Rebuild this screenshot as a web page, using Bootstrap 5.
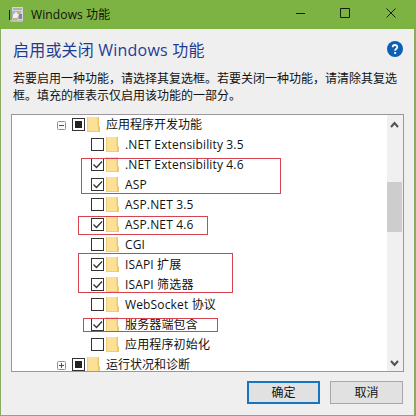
<!DOCTYPE html>
<html lang="zh-CN">
<head>
    <meta charset="UTF-8">
    <meta name="viewport" content="width=device-width, initial-scale=1">
    <title>Windows 功能</title>
    <link href="https://cdn.jsdelivr.net/npm/bootstrap@5.3.0/dist/css/bootstrap.min.css" rel="stylesheet">
    <style>
        body {
            font-family: "Open Sans", "Noto Sans CJK SC", sans-serif;
            font-size: 12px;
            line-height: 17px;
            color: #111;
            background: #f0f0f0;
            overflow: hidden;
        }
        svg { display: block; flex: none; }
        .win { width: 416px; height: 416px; background: #efefef; }
        .win-title { height: 29px; background: #7cb342; padding-left: 8px; }
        .win-title span { margin-left: 7px; letter-spacing: .12px; }
        .win-body {
            height: 387px;
            border: solid #8cab62;
            border-width: 0 2px 1px 1px;
            padding: 10px 10px 0;
        }
        .win-heading { height: 24px; font-size: 16px; line-height: 22px; color: #1f3c94; padding-left: 2px; letter-spacing: .2px; }
        .help { margin: 2px 1px 0 0; }
        .win-desc { margin: 7px -8px 0 2px; height: 44px; }
        .tree { height: 258px; background: #fff; border: 1px solid #9b969b; }
        .tree-row { height: 20px; }
        .tree-row span { margin-left: 6px; line-height: 12px; white-space: nowrap; }
        .tree-row.parent { padding-left: 45px; }
        .tree-row.child { padding-left: 79px; }
        .tree-row.child span { letter-spacing: .15px; }
        .expander { margin: 1px 6px 0 0; }
        .box { margin: 0 2px 1px 0; }
        .scroll { width: 16px; background: #f0f0f0; }
        .thumb { height: 50px; width: 15px; background: #cdcdcd; }
        .dlg-actions { gap: 10px; padding: 9px 1px 0 0; }
        .dlg-btn { width: 73px; height: 23px; font-size: 12px; line-height: 19px; padding: 0; border: 1px solid #aba6ab; border-radius: 0; background: #e1e1e1; color: #111; }
        .dlg-btn.default { border: 2px solid #1874bd; }
        .marker { position: absolute; border: 1px solid #d7434f; }
        .m1 { left: 81px; top: 158px; width: 200px; height: 36px; }
        .m2 { left: 78px; top: 216px; width: 130px; height: 19px; }
        .m3 { left: 78px; top: 253px; width: 155px; height: 40px; }
        .m4 { left: 83px; top: 318px; width: 135px; height: 14px; }
    </style>
</head>
<body>

<div class="win position-relative">
    <!-- Title bar -->
    <div class="win-title d-flex align-items-center">
        <svg width="16" height="18" viewBox="0 0 16 18">
            <path d="M4 1h11v14H4z" fill="#d8d3d6"/>
            <path d="M5 2h9v2H5z" fill="#b4aeb4"/>
            <path d="M4 5h9v8H4z" fill="#a9b7d5"/>
            <path d="M5 9l3-3 3 2-2 4H5z" fill="#f2f2e8"/>
            <path d="M9 5h2v3H9zM5 12h4v2H5z" fill="#d5b347"/>
            <path d="M11 8h3v5h-3z" fill="#7a879f"/>
            <path d="M2 14h12v2H3z" fill="#c3bdbf"/>
            <path d="M1.500 4v10" stroke="#222"/>
        </svg>
        <span class="me-auto">Windows 功能</span>
        <svg width="120" height="29" viewBox="296 0 120 29" fill="none" stroke="#16200c">
            <path d="M295 13.500h10M340.500 8.500h9v9h-9zM386.500 8.500l9 9M395.500 8.500l-9 9"/>
        </svg>
    </div>

    <div class="win-body">
        <div class="win-heading d-flex justify-content-between">
            <span>启用或关闭 Windows 功能</span>
            <svg class="help" width="16" height="16" viewBox="0 0 16 16">
                <circle cx="8" cy="8" r="8" fill="#0d5fb3"/>
                <path d="M5.700 6.200C5.700 3.300 10.300 3.300 10.300 6.100C10.300 7.800 8.100 7.700 8.100 9.700" fill="none" stroke="#fff" stroke-width="1.800"/>
                <path d="M7.200 11h1.900v1.900H7.200z" fill="#fff"/>
            </svg>
        </div>
        <div class="win-desc">若要启用一种功能，请选择其复选框。若要关闭一种功能，请清除其复选<br>框。填充的框表示仅启用该功能的一部分。</div>

        <div class="tree d-flex">
            <div id="rows" class="flex-grow-1 overflow-hidden"></div>
            <div class="scroll d-flex flex-column">
                <svg width="15" height="67" viewBox="0 0 15 67"><path d="M4 12l3.500-4L11 12" fill="none" stroke="#505050" stroke-width="2"/></svg>
                <div class="thumb"></div>
                <svg class="mt-auto" width="15" height="17" viewBox="0 0 15 17"><path d="M4 7l3.500 4L11 7" fill="none" stroke="#505050" stroke-width="2"/></svg>
            </div>
        </div>

        <div class="dlg-actions d-flex justify-content-end">
            <button type="button" class="btn dlg-btn default">确定</button>
            <button type="button" class="btn dlg-btn">取消</button>
        </div>
    </div>

    <!-- Highlighted features -->
    <div class="marker m1"></div>
    <div class="marker m2"></div>
    <div class="marker m3"></div>
    <div class="marker m4"></div>
</div>

<script>
    const features = [
        { name: "应用程序开发功能", state: "partial", expander: "minus" },
        { name: ".NET Extensibility 3.5", state: "off" },
        { name: ".NET Extensibility 4.6", state: "on" },
        { name: "ASP", state: "on" },
        { name: "ASP.NET 3.5", state: "off" },
        { name: "ASP.NET 4.6", state: "on" },
        { name: "CGI", state: "off" },
        { name: "ISAPI 扩展", state: "on" },
        { name: "ISAPI 筛选器", state: "on" },
        { name: "WebSocket 协议", state: "off" },
        { name: "服务器端包含", state: "on" },
        { name: "应用程序初始化", state: "off" },
        { name: "运行状况和诊断", state: "partial", expander: "plus" }
    ];

    const marks = {
        off: "",
        on: '<path d="M2.500 6.500l3 3 5.500-6" fill="none" stroke="#333" stroke-width="1.300"/>',
        partial: '<path d="M3 3h7v7H3z" fill="#222"/>'
    };

    const expanderIcon = type => `
        <svg class="expander" width="9" height="9" viewBox="0 0 9 9" fill="none">
            <rect x=".5" y=".5" width="8" height="8" rx="1" fill="#fafafa" stroke="#919191"/>
            <path d="M2 4.500h5${type === "plus" ? "M4.500 2v5" : ""}" stroke="#3d4a86"/>
        </svg>`;

    document.getElementById("rows").innerHTML = features.map(f => `
        <div class="tree-row d-flex align-items-center ${f.expander ? "parent" : "child"}">
            ${f.expander ? expanderIcon(f.expander) : ""}
            <svg class="box" width="13" height="13" viewBox="0 0 13 13">
                <rect x=".5" y=".5" width="12" height="12" fill="#fff" stroke="#333"/>${marks[f.state]}
            </svg>
            <svg width="13" height="16" viewBox="0 0 13 16">
                <path d="M0 0h12v15H0z" fill="#fbe096"/>
                <path d="M.5 0v14.500h12" fill="none" stroke="#efcd78"/>
                <path d="M10.500 0h1.500v9l1 1v5h-2v-4.500l-.5-1z" fill="#ecc66a"/>
            </svg>
            <span>${f.name}</span>
        </div>`).join("");
</script>

<script src="https://cdn.jsdelivr.net/npm/bootstrap@5.3.0/dist/js/bootstrap.bundle.min.js"></script>
</body>
</html>
